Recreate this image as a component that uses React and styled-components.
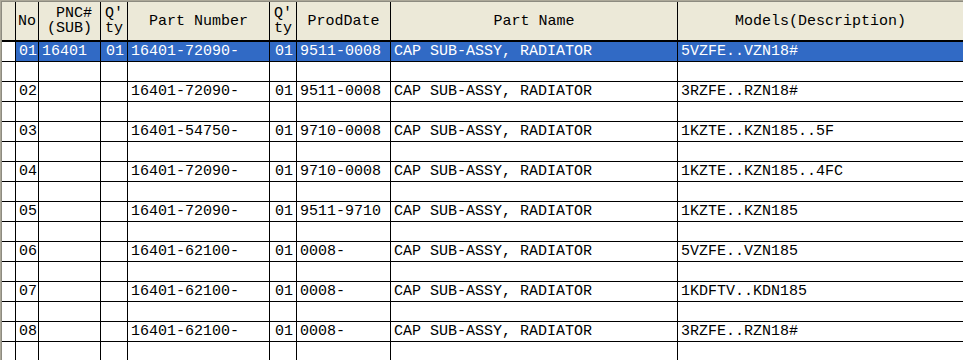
import React from "react";
import styled, { createGlobalStyle } from "styled-components";

const Global = createGlobalStyle`
  html, body { margin: 0; padding: 0; background: #fff; overflow: hidden; }
  body { width: 963px; height: 360px; }
`;

const Frame = styled.div`
  width: 963px;
  height: 360px;
  box-sizing: border-box;
  border-top: 1px solid #aca899;
  border-left: 1px solid #aca899;
  overflow: hidden;
  font-family: "Liberation Mono", "Courier New", monospace;
  font-size: 15px;
`;

const Inner = styled.div`
  border-top: 1px solid #8d8b80;
  border-left: 1px solid #8d8b80;
`;

const Grid = styled.div`
  display: grid;
  grid-template-columns: 13px 22px 61px 26px 141px 26px 93px 286px 285px;
  grid-auto-rows: 19px;
  grid-template-rows: 39px;
  gap: 1px;
  background: #000;
`;

const HeadCell = styled.div`
  background: #ece9d8;
  color: #000;
  border-bottom: 1px solid #000;
  display: flex;
  align-items: center;
  justify-content: center;
  text-align: center;
  white-space: pre;
  line-height: 15px;
  overflow: hidden;
`;

const Cell = styled.div`
  background: ${(p) => (p.$selected ? "#316ac5" : "#fff")};
  color: ${(p) => (p.$selected ? "#fff" : "#000")};
  line-height: 19px;
  padding: 0 3px;
  text-align: ${(p) => p.$align || "left"};
  white-space: pre;
  overflow: hidden;
`;

const RowHead = styled.div`
  background: #fff;
`;

const headers = [
  "",
  "No",
  " PNC#\n(SUB)",
  "Q'\nty",
  "Part Number",
  "Q'\nty",
  "ProdDate",
  "Part Name",
  "Models(Description)",
];

const NAME = "CAP SUB-ASSY, RADIATOR";
const records = [
  ["01", "16401", "01", "16401-72090-", "01", "9511-0008", NAME, "5VZFE..VZN18#"],
  ["02", "", "", "16401-72090-", "01", "9511-0008", NAME, "3RZFE..RZN18#"],
  ["03", "", "", "16401-54750-", "01", "9710-0008", NAME, "1KZTE..KZN185..5F"],
  ["04", "", "", "16401-72090-", "01", "9710-0008", NAME, "1KZTE..KZN185..4FC"],
  ["05", "", "", "16401-72090-", "01", "9511-9710", NAME, "1KZTE..KZN185"],
  ["06", "", "", "16401-62100-", "01", "0008-", NAME, "5VZFE..VZN185"],
  ["07", "", "", "16401-62100-", "01", "0008-", NAME, "1KDFTV..KDN185"],
  ["08", "", "", "16401-62100-", "01", "0008-", NAME, "3RZFE..RZN18#"],
];

const aligns = ["left", "left", "right", "left", "right", "left", "left", "left"];

export default function App() {
  return (
    <Frame>
      <Global />
      <Inner>
        <Grid>
          {headers.map((h, i) => (
            <HeadCell key={"h" + i}>{h}</HeadCell>
          ))}
          {records.map((r, ri) => (
            <React.Fragment key={ri}>
              <RowHead />
              {r.map((v, ci) => (
                <Cell key={ci} $selected={ri === 0} $align={aligns[ci]}>
                  {v}
                </Cell>
              ))}
              <RowHead />
              {r.map((_, ci) => (
                <Cell key={"e" + ci} />
              ))}
            </React.Fragment>
          ))}
        </Grid>
      </Inner>
    </Frame>
  );
}
